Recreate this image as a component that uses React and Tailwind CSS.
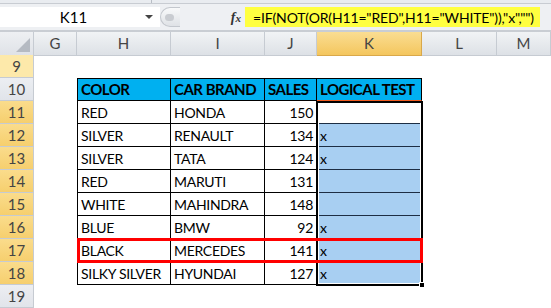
const COLS = 'grid grid-cols-[34px_43px_94px_94px_52px_105px_75px_54px]'

const rows = [
  { n: 11, color: 'RED', brand: 'HONDA', sales: 150, test: '' },
  { n: 12, color: 'SILVER', brand: 'RENAULT', sales: 134, test: 'x' },
  { n: 13, color: 'SILVER', brand: 'TATA', sales: 124, test: 'x' },
  { n: 14, color: 'RED', brand: 'MARUTI', sales: 131, test: '' },
  { n: 15, color: 'WHITE', brand: 'MAHINDRA', sales: 148, test: '' },
  { n: 16, color: 'BLUE', brand: 'BMW', sales: 92, test: 'x' },
  { n: 17, color: 'BLACK', brand: 'MERCEDES', sales: 141, test: 'x' },
  { n: 18, color: 'SILKY SILVER', brand: 'HYUNDAI', sales: 127, test: 'x' },
]

function RowHead({ n, tone }) {
  const bg =
    tone === 'sel'
      ? 'bg-[linear-gradient(#fadc8c,#f6cf6e)]'
      : tone === 'light'
      ? 'bg-[#fde9aa]'
      : 'bg-[linear-gradient(#eceef2,#e1e4ea)]'
  return (
    <div className={`${bg} h-[23px] flex items-center justify-center border-b border-r border-[#c6cbd2] text-[15px] text-[#444]`}>
      {n}
    </div>
  )
}

function Cell({ children, className = '' }) {
  return (
    <div className={`h-[23px] flex items-center px-[3px] border-r border-b border-black text-[14px] tracking-[-0.3px] text-black whitespace-nowrap overflow-hidden ${className}`}>
      {children}
    </div>
  )
}

function HeadCell({ children, className = '' }) {
  return (
    <div className={`h-[23px] flex items-center px-[3px] border-r border-b border-t border-black bg-[#00b0f0] font-bold text-[15px] tracking-[-0.5px] text-black whitespace-nowrap overflow-hidden ${className}`}>
      {children}
    </div>
  )
}

export default function App() {
  return (
    <div className="w-[551px] h-[308px] overflow-hidden bg-white font-['Lato',sans-serif] relative">
      {/* top strip */}
      <div className="h-[4px] bg-[#e9ecf0] border-b border-[#c8ccd2] flex">
        <div className="w-[152px] border-r border-[#b8bdc5]" />
      </div>
      {/* formula bar */}
      <div className="h-[26px] bg-[#eef0f3] flex items-center">
        <div className="w-[160px] h-[20px] bg-white flex items-center">
          <span className="flex-1 text-center text-[15px] text-black pl-[2px]">K11</span>
          <span className="w-0 h-0 border-l-[4px] border-r-[4px] border-t-[4px] border-l-transparent border-r-transparent border-t-[#444] mr-[7px]" />
        </div>
        <div className="w-[20px] h-[20px] rounded-l-full border border-r-0 border-[#c3c7cd] bg-[linear-gradient(#f8f9fa,#dfe2e6)] flex items-center pl-[4px]">
          <div className="w-[9px] h-[7px] rounded-full bg-[#c9ccd1]" />
        </div>
        <div className="flex-1" />
        <span className="font-['Liberation_Serif',serif] italic font-bold text-[14px] text-[#333] mr-[4px]">
          f<span className="text-[11px]">x</span>
        </span>
        <div className="w-[295px] h-[20px] bg-[#ffff40] flex items-center pl-[8px] text-[14px] tracking-[-0.15px] text-black whitespace-nowrap overflow-hidden">
          =IF(NOT(OR(H11="RED",H11="WHITE")),"x","")
        </div>
        <div className="w-[11px]" />
      </div>
      <div className="h-[2px] bg-[#c9cdd3]" />
      {/* column headers */}
      <div className={`${COLS} h-[23px] text-[15px] text-[#444]`}>
        <div className="bg-[linear-gradient(#eef0f3,#dfe2e7)] border-r border-b border-[#c6cbd2] flex items-end justify-end p-[3px]">
          <svg width="14" height="14" viewBox="0 0 14 14">
            <polygon points="14,0 14,14 0,14" fill="#b5bac2" />
          </svg>
        </div>
        {['G', 'H', 'I', 'J', 'K', 'L', 'M'].map((c) => (
          <div
            key={c}
            className={`${c === 'K' ? 'bg-[linear-gradient(#fadd92,#f4c65e)] border-[#d9a84a]' : 'bg-[linear-gradient(#f1f3f5,#dde1e6)] border-[#c6cbd2]'} border-r border-b flex items-center justify-center`}
          >
            {c}
          </div>
        ))}
      </div>
      {/* row 9 */}
      <div className={COLS}>
        <RowHead n={9} tone="light" />
      </div>
      {/* row 10 */}
      <div className={COLS}>
        <RowHead n={10} />
        <div />
        <HeadCell className="border-l">COLOR</HeadCell>
        <HeadCell>CAR BRAND</HeadCell>
        <HeadCell>SALES</HeadCell>
        <HeadCell className="border-b-[#f05a1e]">LOGICAL TEST</HeadCell>
      </div>
      {/* data rows */}
      <div className="relative">
        {rows.map((r) => (
          <div key={r.n} className={COLS}>
            <RowHead n={r.n} tone="sel" />
            <div />
            <Cell className="border-l">{r.color}</Cell>
            <Cell>{r.brand}</Cell>
            <Cell className="justify-end">{r.sales}</Cell>
            <Cell className={`${r.n === 11 ? 'bg-white' : 'bg-[#a8cff2]'} border-b-[#1d2e44]`}>{r.test}</Cell>
          </div>
        ))}
        {/* selection outline */}
        <div className="absolute left-[316px] top-0 w-[107px] h-[185px] border-2 border-black pointer-events-none">
          <div className="w-full h-full border border-white" />
          <div className="absolute -right-[4px] -bottom-[4px] w-[6px] h-[6px] bg-black border border-white" />
        </div>
        {/* red highlight around row 17 */}
        <div className="absolute left-[77px] top-[137px] w-[346px] h-[25px] border-[3px] border-[#ff0000] pointer-events-none" />
      </div>
      {/* row 19 */}
      <div className={COLS}>
        <RowHead n={19} />
      </div>
    </div>
  )
}
